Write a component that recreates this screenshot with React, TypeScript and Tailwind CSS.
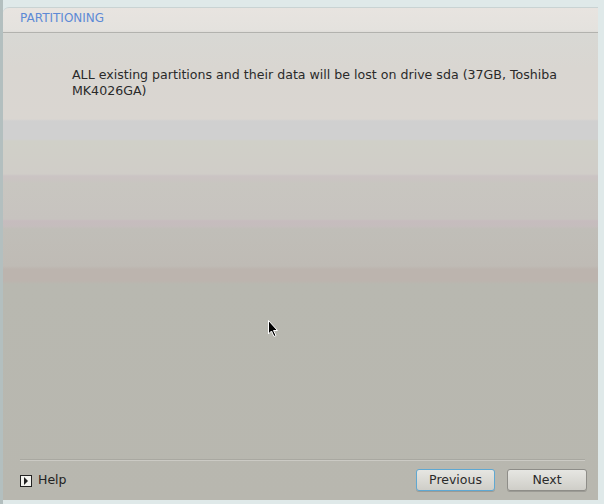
import React from "react"

function Cursor() {
  return (
    <svg width="12" height="18" viewBox="0 0 12 18" className="absolute left-[265px] top-[320px]">
      <path d="M0.5 0.5 L0.5 14 L3.5 11 L6 16.5 L8 15.5 L5.5 10.5 L9.5 10.5 Z" fill="#000" stroke="#fff" strokeWidth="1" />
    </svg>
  )
}

export default function App() {
  return (
    <div className="relative w-[604px] h-[504px] overflow-hidden bg-[#dfe9e9] border-l-[3px] border-[#b3bfbf] pt-[7px] pr-[6px] pb-[4px] font-['DejaVu_Sans',sans-serif] flex">
      <div className="flex-1 flex flex-col rounded-tl-[6px] overflow-hidden border-t border-[#c9d3d3] bg-[linear-gradient(to_bottom,#e8e4e0_0px,#e4e2de_22px,#d8d8d4_26px,#d9d6d1_60px,#dad6d1_111px,#d0d0d0_113px,#d0d0d0_131px,#d0d0c8_133px,#d0cdc8_166px,#cbc4c4_168px,#cac4c2_172px,#c8c6c0_175px,#c7c3bf_211px,#c6bcbe_213px,#c5bdbd_218px,#c0beb8_221px,#bfbbb5_258px,#bcb4ae_261px,#bcb4ae_273px,#b8b8b0_276px,#b8b7af_493px)]">
        <div className="h-[25px] px-[17px] border-b border-[#b2b2ae] shrink-0">
          <div className="text-[12px] leading-[20px] text-[#5d8ad6]">PARTITIONING</div>
        </div>
        <div className="flex-1 pl-[69px] pt-[34px]">
          <p className="w-[492px] text-[12.6px] leading-[16px] text-[#2a2a2a]">
            ALL existing partitions and their data will be lost on drive sda (37GB, Toshiba MK4026GA)
          </p>
        </div>
        <div className="shrink-0 pl-[17px] pr-[11px] pb-[9px]">
          <div className="h-[2px] border-t border-[#a9a8a1] bg-[#cbcac4] mb-[8px] mr-[2px]" />
          <div className="flex items-center">
            <div className="flex items-center gap-[6px] pt-[1px]">
              <span className="w-[12px] h-[12px] border border-[#222] bg-[#f4f4f0] flex items-center justify-center">
                <svg width="6" height="8" viewBox="0 0 6 8"><path d="M1 0 L5 4 L1 8 Z" fill="#222" /></svg>
              </span>
              <span className="text-[12.5px] text-[#222]">Help</span>
            </div>
            <div className="ml-auto flex gap-[12px]">
              <button className="w-[79px] h-[22px] rounded-[3px] border border-[#5fa8d2] bg-[linear-gradient(to_bottom,#e6e6e2,#cfcec8)] text-[12.5px] text-[#2a2a2a] shadow-[0_1px_0_#9c9b95]">
                Previous
              </button>
              <button className="w-[80px] h-[22px] rounded-[3px] border border-[#8e8d88] bg-[linear-gradient(to_bottom,#e6e6e2,#cfcec8)] text-[12.5px] text-[#2a2a2a] shadow-[0_1px_0_#9c9b95]">
                Next
              </button>
            </div>
          </div>
        </div>
      </div>
      <Cursor />
    </div>
  )
}
